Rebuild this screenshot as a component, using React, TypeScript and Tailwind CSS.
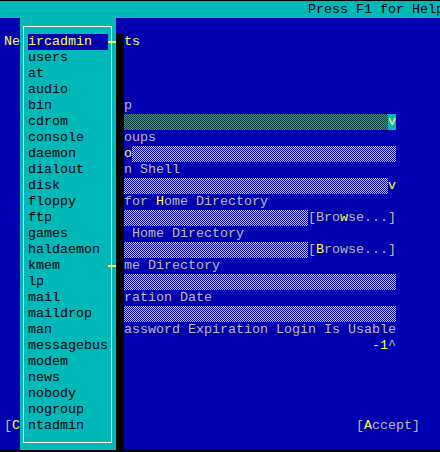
import React from 'react';

const groups = [
  'ircadmin', 'users', 'at', 'audio', 'bin', 'cdrom', 'console', 'daemon', 'dialout',
  'disk', 'floppy', 'ftp', 'games', 'haldaemon', 'kmem', 'lp', 'mail', 'maildrop',
  'man', 'messagebus', 'modem', 'news', 'nobody', 'nogroup', 'ntadmin',
];

const checkBlue =
  'bg-[image:repeating-conic-gradient(#c8c8d8_0_25%,#0000b0_0_50%)] bg-[length:2px_2px]';
const checkGreen =
  'bg-[image:repeating-conic-gradient(#00b4b4_0_25%,#003c3c_0_50%)] bg-[length:2px_2px]';

const Row: React.FC<{ children?: React.ReactNode }> = ({ children }) => (
  <div className="flex h-4 pl-[4px] whitespace-pre text-[#bcbcbc]">{children}</div>
);

const Y: React.FC<{ children: React.ReactNode }> = ({ children }) => (
  <span className="text-[#ffff55]">{children}</span>
);

// the popup covers columns 2..14, so the dialog's visible part starts at column 15
const Skip = () => <span className="w-[120px] shrink-0" />;

const App: React.FC = () => {
  return (
    <div className="relative w-[440px] h-[452px] overflow-hidden bg-black font-['Liberation_Mono','DejaVu_Sans_Mono',monospace] text-[13.333px] leading-4">
      <div className="h-[1px]" />
      {/* top status bar */}
      <div className="h-[17px] bg-[#00b8b8] pt-[1px] pl-[4px] flex whitespace-pre text-black">
        <span className="w-[304px] shrink-0" />
        <span>Press F1 for Help</span>
      </div>

      {/* dialog behind the popup */}
      <div className="bg-[#0000b0] flex flex-col">
        <Row />
        <Row>
          <span className="w-[120px] shrink-0 text-[#ffff55]">Ne</span>
          <Y>ts</Y>
        </Row>
        <Row />
        <Row />
        <Row />
        <Row><Skip /><span>p</span></Row>
        <Row>
          <Skip />
          <span className={`w-[264px] ${checkGreen}`} />
          <span className="w-[8px] bg-[#00b8b8] text-[#ffff55]">v</span>
        </Row>
        <Row><Skip /><span>oups</span></Row>
        <Row>
          <Skip />
          <Y>o</Y>
          <span className={`w-[264px] ${checkBlue}`} />
        </Row>
        <Row><Skip /><span>n Shell</span></Row>
        <Row>
          <Skip />
          <span className={`w-[264px] ${checkBlue}`} />
          <Y>v</Y>
        </Row>
        <Row><Skip /><span>for <Y>H</Y>ome Directory</span></Row>
        <Row>
          <Skip />
          <span className={`w-[184px] ${checkBlue}`} />
          <span>[Bro<Y>w</Y>se...]</span>
        </Row>
        <Row><Skip /><span> Home Directory</span></Row>
        <Row>
          <Skip />
          <span className={`w-[184px] ${checkBlue}`} />
          <span>[<Y>B</Y>rowse...]</span>
        </Row>
        <Row><Skip /><span>me Directory</span></Row>
        <Row>
          <Skip />
          <span className={`w-[272px] ${checkBlue}`} />
        </Row>
        <Row><Skip /><span>ration Date</span></Row>
        <Row>
          <Skip />
          <span className={`w-[272px] ${checkBlue}`} />
        </Row>
        <Row><Skip /><span>assword Expiration Login Is Usable</span></Row>
        <Row>
          <Skip />
          <span className="w-[248px] shrink-0" />
          <Y>-1</Y>
          <span>^</span>
        </Row>
        <Row />
        <Row />
        <Row />
        <Row />
        <Row>
          <span className="w-[352px] shrink-0">[<Y>C</Y></span>
          <span>[<Y>A</Y>ccept]</span>
        </Row>
        <Row />
      </div>

      {/* popup list shadow */}
      <div className="absolute left-[116px] top-[34px] w-[8px] h-[418px] bg-black" />

      {/* popup list */}
      <div className="absolute left-[20px] top-[18px] w-[96px] h-[432px] bg-[#00b8b8] pt-4 pl-2 flex flex-col">
        {groups.map((g, i) => (
          <div
            key={g}
            className={`w-20 h-4 whitespace-pre ${i === 0 ? 'bg-[#0000b0] text-[#ffff55]' : 'text-black'}`}
          >
            {g}
          </div>
        ))}

        {/* frame */}
        <div className="absolute left-[3px] top-[8px] w-[89px] h-[1px] bg-white" />
        <div className="absolute left-[3px] top-[8px] w-[1px] h-[417px] bg-white" />
        <div className="absolute left-[3px] top-[424px] w-[89px] h-[1px] bg-white" />
        <div className="absolute left-[91px] top-[8px] w-[1px] h-[16px] bg-white" />
        <div className="absolute left-[91px] top-[24px] w-[1px] h-[224px] bg-[#ffff55]" />
        <div className="absolute left-[91px] top-[248px] w-[1px] h-[177px] bg-white" />
        {/* scroll thumb ends */}
        <div className="absolute left-[88px] top-[23px] w-[8px] h-[2px] bg-[#ffff55]" />
        <div className="absolute left-[88px] top-[247px] w-[8px] h-[2px] bg-[#ffff55]" />
      </div>
    </div>
  );
};

export default App;
